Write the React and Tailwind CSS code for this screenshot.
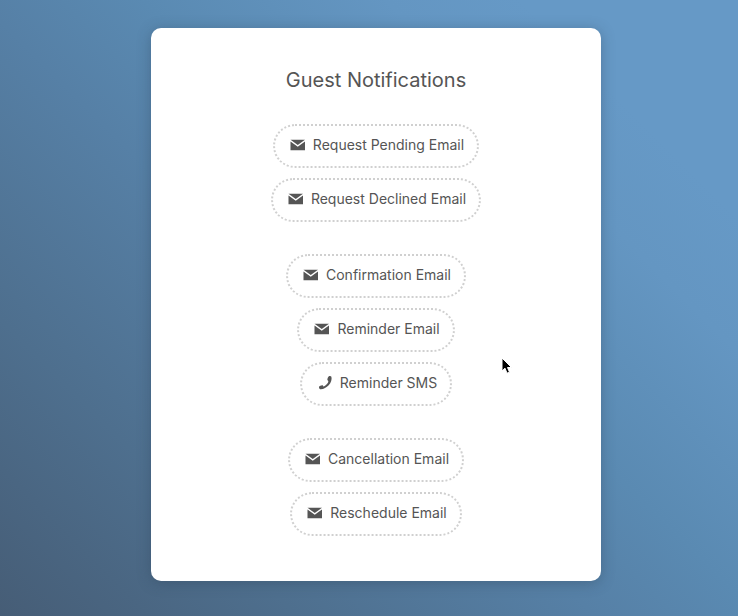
import React from 'react';

const groups = [
  [
    { label: 'Request Pending Email', type: 'email' },
    { label: 'Request Declined Email', type: 'email' },
  ],
  [
    { label: 'Confirmation Email', type: 'email' },
    { label: 'Reminder Email', type: 'email' },
    { label: 'Reminder SMS', type: 'sms' },
  ],
  [
    { label: 'Cancellation Email', type: 'email' },
    { label: 'Reschedule Email', type: 'email' },
  ],
];

const MailIcon = () => (
  <svg viewBox="0 0 16 16" className="w-4 h-4" fill="currentColor" aria-hidden="true">
    <path d="M.5 2.800h14.500L7.750 7.900z" />
    <path d="M.5 4.500l4.200 3 3.050 2.200 3.050-2.200 4.200-3V13.200H.5z" />
  </svg>
);

const PhoneIcon = () => (
  <svg viewBox="0 0 16 16" className="w-4 h-4" fill="currentColor" aria-hidden="true">
    <path d="M11.600 1.500c1-.6 2.200-.5 2.800.2.700 2.700-.3 6-2.700 8.600-2.400 2.600-5.500 4.200-8.600 3.900-.9-.4-1.300-1.500-1-2.600.4-.8 2.700-1.700 3.500-1.300.4.200.5 1 .9 1.100.8 0 2.200-1 3.200-2.100 1-1.100 1.700-2.300 1.600-3.100-.1-.4-.8-.6-.9-1.100-.2-.9.400-3.100 1.200-3.600z" />
  </svg>
);

const NotificationButton = ({ label, type }) => (
  <button
    type="button"
    className="flex items-center gap-[7px] h-11 pl-[15px] pr-[13px] pb-[2px] rounded-full border-2 border-dotted border-[#d0d0d0] text-sm cursor-pointer"
  >
    {type === 'sms' ? <PhoneIcon /> : <MailIcon />}
    <span>{label}</span>
  </button>
);

const App = () => {
  return (
    <main className="min-h-screen pl-[14px] pt-7 pb-[35px] bg-[linear-gradient(45deg,#465d76_0%,#4e6f8e_22%,#5680a6_44%,#5a8ab2_56%,#6496c2_74%,#6699c6_84%)] font-['Inter',sans-serif] text-[#555555]">
      <section className="w-full max-w-[450px] mx-auto pt-9 pb-[45px] bg-white rounded-[10px] shadow-[0_2px_14px_rgba(40,60,80,0.35)]">
        <h1 className="text-center text-[20px] leading-8 mb-7">Guest Notifications</h1>
        <div className="flex flex-col gap-8">
          {groups.map((group) => (
            <div key={group[0].label} className="flex flex-col items-center gap-[10px]">
              {group.map((item) => (
                <NotificationButton key={item.label} {...item} />
              ))}
            </div>
          ))}
        </div>
      </section>
      {/* pointer floating over the card */}
      <svg viewBox="0 0 12 18" className="absolute left-[501px] top-[357px] w-3 h-[18px]" aria-hidden="true">
        <path d="M1 1v13l3-2.800 2 5 2.500-1-2-4.700h4z" fill="#000" stroke="#fff" strokeWidth="1" />
      </svg>
    </main>
  );
};

export default App;
